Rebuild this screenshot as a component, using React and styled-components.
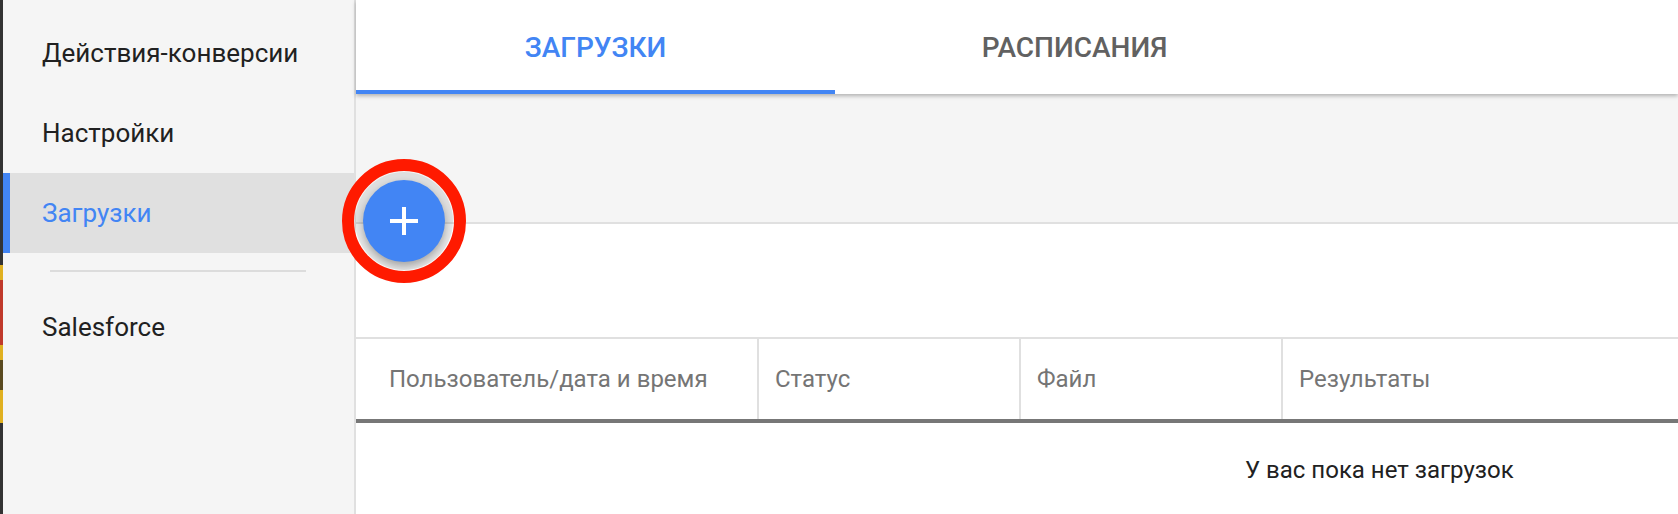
import React from 'react';
import styled, { createGlobalStyle } from 'styled-components';

const GlobalStyle = createGlobalStyle`
  html, body {
    margin: 0;
    padding: 0;
    background: #ffffff;
    font-family: Roboto, "Noto Sans", "Liberation Sans", sans-serif;
    overflow: hidden;
  }
`;

const Page = styled.div`
  display: flex;
  height: 514px;
  width: 1678px;
`;

const EdgeStrip = styled.div`
  width: 3px;
  flex-shrink: 0;
  background: linear-gradient(
    to bottom,
    #333 0, #333 265px,
    #e0b020 265px, #e0b020 280px,
    #c0392b 280px, #c0392b 345px,
    #e0b020 345px, #e0b020 360px,
    #5a4a20 360px, #5a4a20 390px,
    #e0b020 390px, #e0b020 423px,
    #333 423px
  );
`;

const Sidebar = styled.nav`
  width: 353px;
  flex-shrink: 0;
  background: #f5f5f5;
  border-right: 2px solid #e0e0e0;
  padding-top: 13px;
  box-sizing: border-box;
`;

const NavItem = styled.div`
  height: 80px;
  display: flex;
  align-items: center;
  box-sizing: border-box;
  padding-left: ${p => (p.$active ? '32px' : '39px')};
  border-left: ${p => (p.$active ? '7px solid #4285f4' : 'none')};
  background: ${p => (p.$active ? '#e0e0e0' : 'transparent')};
  color: ${p => (p.$active ? '#4285f4' : '#212121')};
  font-size: 26px;
`;

const Divider = styled.hr`
  margin: 17px 0 15px 47px;
  width: 256px;
  border: none;
  height: 2px;
  background: #dcdcdc;
`;

const Main = styled.main`
  flex: 1;
  display: flex;
  flex-direction: column;
  position: relative;
`;

const TabBar = styled.div`
  display: flex;
  height: 94px;
  background: #fff;
  box-shadow: 0 2px 4px rgba(0, 0, 0, 0.28);
  position: relative;
  z-index: 2;
`;

const Tab = styled.div`
  width: 479px;
  display: flex;
  align-items: center;
  justify-content: center;
  box-sizing: border-box;
  padding-top: 4px;
  border-bottom: 4px solid ${p => (p.$active ? '#4285f4' : 'transparent')};
  color: ${p => (p.$active ? '#4285f4' : '#616161')};
  font-size: 28px;
  font-weight: 500;
`;

const ActionBand = styled.div`
  height: 128px;
  background: #f5f5f5;
  border-bottom: 2px solid #e0e0e0;
  position: relative;
`;

const Fab = styled.button`
  position: absolute;
  left: 7px;
  bottom: -40px;
  width: 82px;
  height: 82px;
  border-radius: 50%;
  border: none;
  background: #4285f4;
  display: flex;
  align-items: center;
  justify-content: center;
  padding: 0;
  box-shadow: 0 0 0 8px rgba(0, 0, 0, 0.09), 0 4px 8px rgba(0, 0, 0, 0.3);
  z-index: 3;
`;

const Highlight = styled.div`
  position: absolute;
  left: -21px;
  top: -21px;
  width: 100px;
  height: 100px;
  border: 12px solid #ff1a00;
  border-radius: 50%;
  pointer-events: none;
`;

const Spacer = styled.div`
  height: 113px;
`;

const Table = styled.div`
  border-top: 2px solid #e0e0e0;
`;

const HeaderRow = styled.div`
  display: grid;
  grid-template-columns: 401px 262px 262px 1fr;
  height: 80px;
  border-bottom: 4px solid #777;
`;

const HeaderCell = styled.div`
  display: flex;
  align-items: center;
  padding-left: ${p => (p.$first ? '33px' : '16px')};
  border-left: ${p => (p.$first ? 'none' : '2px solid #e0e0e0')};
  color: #757575;
  font-size: 24px;
`;

const Empty = styled.div`
  padding: 33px 0 0 889px;
  color: #212121;
  font-size: 24px;
`;

const PlusIcon = () => (
  <svg width="28" height="28" viewBox="0 0 28 28">
    <path d="M14 0v28M0 14h28" stroke="#fff" strokeWidth="4" />
  </svg>
);

const columns = ['Пользователь/дата и время', 'Статус', 'Файл', 'Результаты'];

export default function App() {
  return (
    <Page>
      <GlobalStyle />
      <EdgeStrip />
      <Sidebar>
        <NavItem>Действия-конверсии</NavItem>
        <NavItem>Настройки</NavItem>
        <NavItem $active>Загрузки</NavItem>
        <Divider />
        <NavItem>Salesforce</NavItem>
      </Sidebar>
      <Main>
        <TabBar>
          <Tab $active>ЗАГРУЗКИ</Tab>
          <Tab>РАСПИСАНИЯ</Tab>
        </TabBar>
        <ActionBand>
          <Fab>
            <PlusIcon />
            <Highlight />
          </Fab>
        </ActionBand>
        <Spacer />
        <Table>
          <HeaderRow>
            {columns.map((c, i) => (
              <HeaderCell key={c} $first={i === 0}>{c}</HeaderCell>
            ))}
          </HeaderRow>
          <Empty>У вас пока нет загрузок</Empty>
        </Table>
      </Main>
    </Page>
  );
}
